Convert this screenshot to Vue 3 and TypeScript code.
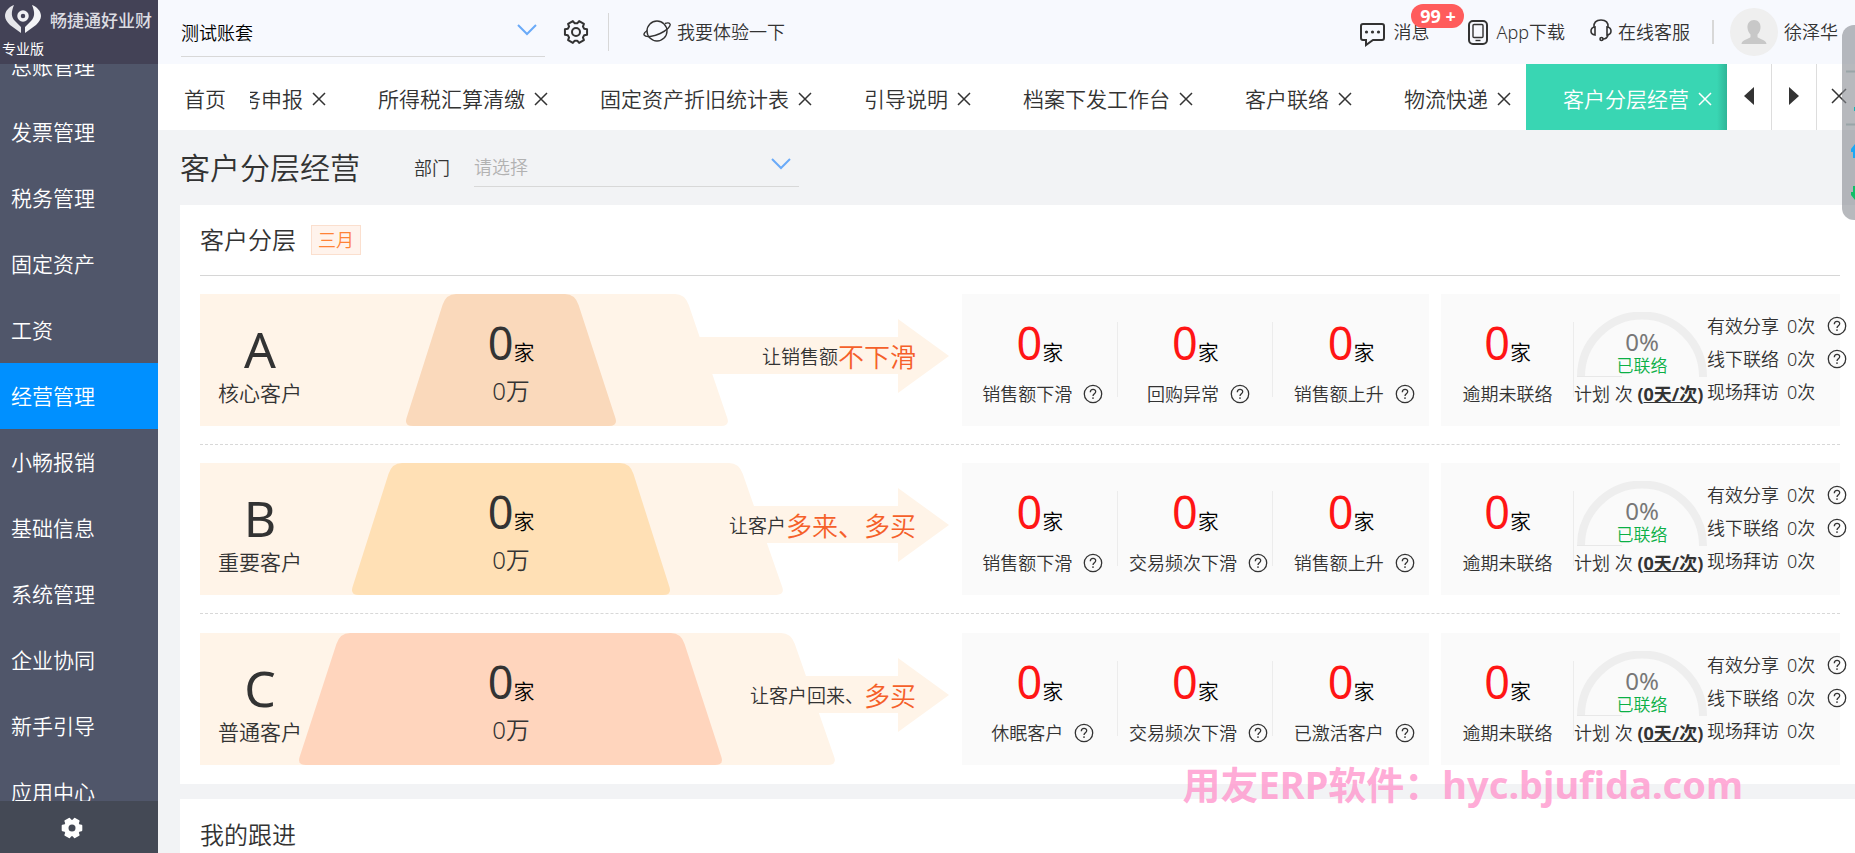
<script setup lang="ts">
import { ref } from 'vue'

interface Stat { label: string; help: boolean }
interface Tier {
  letter: string
  name: string
  fill: string
  inner: [number, number, number, number]
  outer: [number, number]
  plain: string
  strong: string
  stats: Stat[]
}

const menu = ['总账管理', '发票管理', '税务管理', '固定资产', '工资', '经营管理', '小畅报销', '基础信息', '系统管理', '企业协同', '新手引导', '应用中心']
const activeMenu = ref('经营管理')

const tabs = ['税务申报', '所得税汇算清缴', '固定资产折旧统计表', '引导说明', '档案下发工作台', '客户联络', '物流快递', '客户分层经营']
const activeTab = ref('客户分层经营')

const account = ref('测试账套')
const department = ref('')

const tiers: Tier[] = [
  {
    letter: 'A', name: '核心客户', fill: '#fad9bb', inner: [246, 375, 418, 204], outer: [485, 530],
    plain: '让销售额', strong: '不下滑',
    stats: [{ label: '销售额下滑', help: true }, { label: '回购异常', help: true }, { label: '销售额上升', help: true }],
  },
  {
    letter: 'B', name: '重要客户', fill: '#ffe0b5', inner: [192, 430, 472, 150], outer: [539, 585],
    plain: '让客户', strong: '多来、多买',
    stats: [{ label: '销售额下滑', help: true }, { label: '交易频次下滑', help: true }, { label: '销售额上升', help: true }],
  },
  {
    letter: 'C', name: '普通客户', fill: '#ffd5bd', inner: [140, 481, 524, 97], outer: [591, 637],
    plain: '让客户回来、', strong: '多买',
    stats: [{ label: '休眠客户', help: true }, { label: '交易频次下滑', help: true }, { label: '已激活客户', help: true }],
  },
]

const contacts = [
  { label: '有效分享', help: true },
  { label: '线下联络', help: true },
  { label: '现场拜访', help: false },
]

const H = 132

function rightEdge(top: number, bottom: number): string {
  const s = (bottom - top) / H
  return `H${top - 10} Q${top} 0 ${top + s * 11} 11 L${bottom - s * 8} ${H - 8} Q${bottom} ${H} ${bottom - 9} ${H}`
}

function basePath(t: Tier): string {
  return `M0 0 ${rightEdge(t.outer[0], t.outer[1])} H0 Z`
}

function innerPath(t: Tier): string {
  const [tl, tr, br, bl] = t.inner
  const s = (tl - bl) / H
  return `M${tl + 10} 0 ${rightEdge(tr, br)} H${bl + 9} Q${bl} ${H} ${bl + s * 8} ${H - 8} L${tl - s * 11} 11 Q${tl} 0 ${tl + 10} 0 Z`
}

// Six-toothed cog outline centred on (c, c)
function gearPath(c: number, outer: number, root: number): string {
  const pts: string[] = []
  for (let i = 0; i < 6; i++) {
    const steps: [number, number][] = [[-22, root], [-14, outer], [14, outer], [22, root]]
    for (const [offset, radius] of steps) {
      const a = ((i * 60 + offset) * Math.PI) / 180
      pts.push(`${(c + radius * Math.cos(a)).toFixed(2)} ${(c + radius * Math.sin(a)).toFixed(2)}`)
    }
  }
  return `M${pts.join('L')}Z`
}
</script>

<template>
  <div class="shell">
    <aside class="sidebar">
      <div class="brand">
        <div class="brand-line">
          <svg class="brand-mark" viewBox="0 0 36 30" aria-hidden="true">
            <path d="M9 1C4 3 0 7 0 12c0 3 2 6 5 9l11 8v-6l-6-6c-4-4-4-9-1-16z" fill="#e6e6ea" />
            <path d="M27 1c5 2 9 6 9 11 0 3-2 6-5 9l-11 8v-6l6-6c4-4 4-9 1-16z" fill="#f4f4f6" />
            <circle cx="18" cy="12" r="4" fill="none" stroke="#f0f0f3" stroke-width="3.500" />
          </svg>
          <span class="brand-name">畅捷通好业财</span>
        </div>
        <div class="edition">专业版</div>
      </div>
      <nav class="menu">
        <ul>
          <li v-for="m in menu" :key="m">
            <a href="#" :class="{ on: m === activeMenu }" @click.prevent="activeMenu = m">{{ m }}</a>
          </li>
        </ul>
      </nav>
      <button class="side-foot" type="button" aria-label="设置">
        <svg width="22" height="22" viewBox="0 0 22 22" aria-hidden="true">
          <path :d="gearPath(11, 9.8, 7.6)" fill="#fff" stroke="#fff" stroke-width="1.600" stroke-linejoin="round" />
          <circle cx="11" cy="11" r="3.500" fill="#444955" />
        </svg>
      </button>
    </aside>

    <div class="main">
      <header class="topbar">
        <div class="select-box account">
          <select v-model="account" aria-label="账套">
            <option>测试账套</option>
          </select>
          <svg class="chev" width="20" height="12" viewBox="0 0 20 12" aria-hidden="true"><path d="M1 1l9 9 9-9" /></svg>
        </div>
        <button class="plain gear" type="button" aria-label="账套设置">
          <svg width="26" height="26" viewBox="0 0 26 26" aria-hidden="true">
            <g fill="none" stroke="#333" stroke-width="2" stroke-linejoin="round">
              <path :d="gearPath(13, 11.4, 8.8)" />
              <circle cx="13" cy="13" r="4" />
            </g>
          </svg>
        </button>
        <span class="rule tall"></span>
        <a class="top-link try" href="#">
          <svg width="28" height="24" viewBox="0 0 28 24" aria-hidden="true">
            <g fill="none" stroke="#333" stroke-width="1.400">
              <circle cx="14" cy="11" r="10" />
              <path d="M4.300 10.500C2 12 .5 14 1.200 15.200c1.500 2.500 9 1.500 16-1.700S28 6 27 4c-.6-1-3-1.200-5-.5" />
            </g>
          </svg>
          我要体验一下
        </a>
        <div class="top-right">
          <a class="top-link msg" href="#">
            <svg width="25" height="29" viewBox="0 0 25 29" aria-hidden="true">
              <path d="M3 6h19q2 0 2 2v12q0 2-2 2h-9l-7 5v-5H3q-2 0-2-2V8q0-2 2-2z" fill="none" stroke="#333" stroke-width="2" />
              <g fill="#333"><circle cx="6.500" cy="14" r="1.600" /><circle cx="12.500" cy="14" r="1.600" /><circle cx="18.500" cy="14" r="1.600" /></g>
            </svg>
            消息
            <span class="badge">99 +</span>
          </a>
          <a class="top-link app" href="#">
            <svg width="20" height="25" viewBox="0 0 20 25" aria-hidden="true">
              <rect x="1" y="1" width="18" height="23" rx="4" fill="none" stroke="#333" stroke-width="2" />
              <rect x="5" y="4.500" width="10" height="13" rx="1" fill="none" stroke="#333" stroke-width="1.400" />
              <path d="M7.500 20.500h5" stroke="#333" stroke-width="1.400" />
            </svg>
            App下载
          </a>
          <a class="top-link service" href="#">
            <svg width="22" height="26" viewBox="0 0 22 26" aria-hidden="true">
              <g fill="none" stroke="#333" stroke-width="1.600">
                <path d="M4 8C3.500 3.500 6 1 11 1s7.500 2.500 7 7" />
                <path d="M5 8v8Q1 15.500 1 12T5 8z" />
                <path d="M17 8v8q4-.5 4-4T17 8z" />
                <path d="M18 16q-1 4-5 4" />
                <circle cx="11.500" cy="20" r="1.500" />
              </g>
            </svg>
            在线客服
          </a>
          <span class="rule short"></span>
          <a class="top-link user" href="#">
            <svg width="48" height="48" viewBox="0 0 48 48" aria-hidden="true">
              <circle cx="24" cy="24" r="24" fill="#efefef" />
              <path d="M24 12c4 0 7 3 6.500 8-.3 3-1.500 5-3 6.500V29c0 1.500 9 2.500 9 7H11.500c0-4.500 9-5.500 9-7v-2.500c-1.500-1.500-2.700-3.500-3-6.500C17 15 20 12 24 12z" fill="#c8c8c8" />
            </svg>
            徐泽华
          </a>
        </div>
      </header>

      <div class="tabbar">
        <button class="home" type="button">首页</button>
        <div class="tabs">
          <div v-for="t in tabs" :key="t" class="tab" :class="{ current: t === activeTab }">
            <button class="tab-text" type="button" @click="activeTab = t">{{ t }}</button>
            <button class="tab-x" type="button" :aria-label="'关闭' + t">
              <svg width="14" height="14" viewBox="0 0 14 14" aria-hidden="true"><path d="M1 1l12 12M13 1L1 13" /></svg>
            </button>
          </div>
        </div>
        <div class="tab-tools">
          <button type="button" aria-label="向左"><svg width="10" height="18" viewBox="0 0 10 18" aria-hidden="true"><path d="M10 0v18L0 9z" fill="#333" /></svg></button>
          <button type="button" aria-label="向右"><svg width="10" height="18" viewBox="0 0 10 18" aria-hidden="true"><path d="M0 0v18l10-9z" fill="#333" /></svg></button>
          <button type="button" aria-label="全部关闭"><svg width="16" height="16" viewBox="0 0 16 16" aria-hidden="true"><path d="M1 1l14 14M15 1L1 15" stroke="#333" stroke-width="1.500" /></svg></button>
        </div>
      </div>

      <main class="content">
        <div class="page-head">
          <h1>客户分层经营</h1>
          <label for="dept">部门</label>
          <div class="select-box dept">
            <select id="dept" v-model="department" class="empty">
              <option value="">请选择</option>
            </select>
            <svg class="chev" width="20" height="12" viewBox="0 0 20 12" aria-hidden="true"><path d="M1 1l9 9 9-9" /></svg>
          </div>
        </div>

        <section class="card tiers">
          <div class="card-head">
            <h2>客户分层</h2>
            <span class="month">三月</span>
          </div>

          <div v-for="t in tiers" :key="t.letter" class="tier">
            <div class="funnel">
              <svg class="funnel-bg" viewBox="0 0 750 132" preserveAspectRatio="none" aria-hidden="true">
                <path :d="basePath(t)" fill="#fff4e8" />
                <path d="M490 43H698V25L749 62L698 99V80H490z" fill="#fff4e8" />
                <path :d="innerPath(t)" :fill="t.fill" />
              </svg>
              <div class="grade">
                <div class="letter">{{ t.letter }}</div>
                <div class="grade-name">{{ t.name }}</div>
              </div>
              <div class="count">
                <div class="num"><b>0</b>家</div>
                <div class="amount">0万</div>
              </div>
              <div class="goal">{{ t.plain }}<em>{{ t.strong }}</em></div>
            </div>

            <div class="panel stats">
              <div v-for="s in t.stats" :key="s.label" class="stat">
                <div class="num red"><b>0</b>家</div>
                <div class="stat-label helped">
                  {{ s.label }}
                  <button class="help" type="button" :aria-label="s.label + '说明'">
                    <svg width="20" height="20" viewBox="0 0 20 20" aria-hidden="true">
                      <circle cx="10" cy="10" r="8.700" /><path d="M7.300 8.200c0-3.800 5.600-3.600 5.400-.4-.1 2-2.700 2-2.700 4.200M10 13.300v1.700" />
                    </svg>
                  </button>
                </div>
              </div>
            </div>

            <div class="panel contact">
              <div class="stat">
                <div class="num red"><b>0</b>家</div>
                <div class="stat-label">逾期未联络</div>
              </div>
              <div class="gauge">
                <div class="dial">
                  <svg width="130" height="65" viewBox="0 0 130 65" aria-hidden="true">
                    <path d="M4 65V64.500a61 61 0 0 1 122 0V65" fill="none" stroke="#eee" stroke-width="8" />
                    <path d="M0 64.500h45" stroke="#e8e8e8" />
                  </svg>
                  <div class="dial-text">
                    <span class="pct">0%</span>
                    <span class="done">已联络</span>
                  </div>
                </div>
                <div class="plan">计划 次 <strong>(<a href="#">0天/次</a>)</strong></div>
              </div>
              <ul class="contact-list">
                <li v-for="c in contacts" :key="c.label">
                  <span>{{ c.label }}</span><span>0次</span>
                  <button v-if="c.help" class="help" type="button" :aria-label="c.label + '说明'">
                    <svg width="20" height="20" viewBox="0 0 20 20" aria-hidden="true">
                      <circle cx="10" cy="10" r="8.700" /><path d="M7.300 8.200c0-3.800 5.600-3.600 5.400-.4-.1 2-2.700 2-2.700 4.200M10 13.300v1.700" />
                    </svg>
                  </button>
                </li>
              </ul>
            </div>
          </div>
        </section>

        <section class="card follow">
          <h2>我的跟进</h2>
        </section>
      </main>
    </div>

    <div class="dock">
      <svg width="13" height="195" viewBox="0 0 13 195" aria-hidden="true">
        <path d="M4 46.500h9M4 99.500h9" stroke="#9aa5a8" stroke-width="2" />
        <path d="M12 82h1v4h-1z" fill="#18b4b4" />
        <path d="M13 119v14h-2v-6H9v-3z" fill="#1ba8f5" />
        <path d="M13 175v-14h-2v6H9v3z" fill="#0fbf68" />
      </svg>
    </div>
    <div class="watermark">用友ERP软件：hyc.bjufida.com</div>
  </div>
</template>

<style>
body {
  margin: 0;
}
</style>

<style scoped>
.shell {
  position: relative;
  display: flex;
  height: 100vh;
  overflow: hidden;
  background: #f2f3f5;
  color: #333;
  font-family: "Noto Sans", "Noto Sans CJK SC", sans-serif;
  font-weight: 350;
  font-size: 18px;
  line-height: 24px;
}
button, select {
  font: inherit;
  color: inherit;
  background: none;
  border: 0;
  margin: 0;
  padding: 0;
  cursor: pointer;
}
svg {
  display: block;
  flex: none;
}
a {
  color: inherit;
  text-decoration: none;
}
ul {
  list-style: none;
  margin: 0;
  padding: 0;
}
h1, h2 {
  margin: 0;
  font-weight: 350;
}

.sidebar {
  flex: none;
  width: 158px;
  display: flex;
  flex-direction: column;
  background: #50566a;
  color: #fff;
}
.brand {
  flex: none;
  box-sizing: border-box;
  height: 64px;
  padding: 3px 0 0 2px;
  background: #434256;
}
.brand-line {
  display: flex;
  align-items: center;
  gap: 9px;
  height: 32px;
  padding-left: 3px;
}
.brand-mark {
  width: 36px;
  height: 30px;
}
.brand-name {
  padding-top: 4px;
  font-size: 17px;
  font-weight: 500;
  color: #dcdce2;
  white-space: nowrap;
}
.edition {
  font-size: 14px;
  font-weight: 400;
  line-height: 28px;
}
.menu {
  flex: 1;
  min-height: 0;
  overflow: hidden;
}
.menu ul {
  margin-top: -31px;
}
.menu a {
  display: block;
  padding-left: 11px;
  font-size: 21px;
  line-height: 66px;
}
.menu a.on {
  background: #0090ff;
}
.side-foot {
  flex: none;
  display: flex;
  align-items: center;
  justify-content: center;
  height: 52px;
  padding: 2px 14px 0 0;
  background: #444955;
}

.main {
  flex: 1;
  min-width: 0;
  display: flex;
  flex-direction: column;
}
.topbar {
  flex: none;
  display: flex;
  align-items: center;
  height: 64px;
  padding: 0 17px 0 23px;
  background: #f7f9fe;
}
.select-box {
  position: relative;
  border-bottom: 1px solid #d8d8d8;
}
.select-box select {
  display: block;
  width: 100%;
  height: 100%;
  appearance: none;
  outline: none;
}
.chev {
  position: absolute;
  right: 8px;
  top: 50%;
  margin-top: -9px;
  pointer-events: none;
}
.chev path {
  fill: none;
  stroke: #6aaaf8;
  stroke-width: 2;
}
.account {
  width: 364px;
  height: 46px;
  margin-top: 2px;
  color: #000;
}
.gear {
  margin-left: 18px;
}
.rule {
  flex: none;
  background: #d8d8d8;
}
.rule.tall {
  width: 1px;
  height: 38px;
  margin: 0 34px 0 19px;
}
.rule.short {
  width: 2px;
  height: 24px;
  margin: 0 16px 0 22px;
}
.top-link {
  position: relative;
  display: flex;
  align-items: center;
  gap: 6px;
  white-space: nowrap;
}
.top-right {
  margin-left: auto;
  display: flex;
  align-items: center;
}
.msg, .app {
  gap: 8px;
}
.app {
  margin-left: 39px;
}
.service {
  margin-left: 25px;
}
.badge {
  position: absolute;
  left: 51px;
  top: -14px;
  width: 53px;
  height: 24px;
  border-radius: 12px;
  background: #ff5c5c;
  color: #fff;
  font-size: 18px;
  font-weight: 700;
  text-align: center;
}

.tabbar {
  flex: none;
  display: flex;
  height: 66px;
  background: #fff;
  font-size: 21px;
}
.home {
  flex: none;
  padding: 4px 24px 0 26px;
}
.tabs {
  flex: 1;
  min-width: 0;
  display: flex;
  justify-content: flex-end;
  overflow: hidden;
}
.tab {
  flex: none;
  display: flex;
  align-items: center;
  padding: 4px 15px 0 37px;
}
.tab-x {
  padding-left: 9px;
}
.tab-x path {
  fill: none;
  stroke: currentColor;
  stroke-width: 1.5;
}
.tab.current {
  color: #fff;
  background: linear-gradient(to left, #2fb597, #39d6b3 10px);
}
.tab-tools {
  flex: none;
  display: flex;
  width: 128px;
  overflow: hidden;
}
.tab-tools button {
  flex: none;
  display: flex;
  align-items: center;
  justify-content: center;
  width: 44px;
  padding-bottom: 2px;
}
.tab-tools button + button {
  width: 45px;
  border-left: 1px solid #ddd;
}

.content {
  flex: 1;
  min-height: 0;
  overflow: hidden;
  padding-left: 22px;
}
.page-head {
  display: flex;
  align-items: center;
  height: 75px;
}
h1 {
  font-size: 30px;
  line-height: 40px;
}
.page-head label {
  margin: 0 24px 0 54px;
}
.dept {
  width: 325px;
  height: 38px;
}
.empty {
  color: #b2b2b2;
}
.card {
  background: #fff;
  padding: 0 15px 19px 20px;
}
h2 {
  font-size: 24px;
  line-height: 32px;
}
.card-head {
  display: flex;
  align-items: center;
  gap: 15px;
  height: 70px;
  border-bottom: 1px solid #d6d6d6;
}
.month {
  box-sizing: border-box;
  height: 30px;
  padding: 0 6px;
  border: 1px solid #fbdfce;
  background: #fff3ec;
  color: #ff8236;
  line-height: 28px;
}
.tier {
  display: grid;
  grid-template-columns: minmax(0, 750fr) minmax(0, 467fr) minmax(0, 399fr);
  gap: 12px;
  height: 132px;
  padding: 18px 0;
}
.tier + .tier {
  border-top: 1px dashed #d8d8d8;
}
.tier:last-child {
  padding: 19px 0 0;
}
.funnel {
  position: relative;
  display: grid;
  grid-template-columns: 120fr 382fr 248fr;
}
.funnel-bg {
  position: absolute;
  inset: 0;
  width: 100%;
  height: 100%;
}
.grade, .count, .goal {
  position: relative;
  text-align: center;
}
.grade {
  padding-top: 26px;
}
.letter {
  font-size: 50px;
  font-weight: 400;
  line-height: 58px;
}
.grade-name {
  font-size: 21px;
  line-height: 30px;
}
.count {
  padding-top: 19px;
}
.num {
  height: 60px;
  font-size: 21px;
  line-height: 60px;
  color: #000;
}
.num b {
  font-size: 45px;
  font-weight: 400;
  line-height: 60px;
  color: #333;
}
.num.red b {
  color: #ff1515;
}
.amount {
  font-size: 24px;
  line-height: 36px;
}
.goal {
  display: flex;
  align-items: center;
  justify-content: flex-end;
  height: 126px;
  padding-right: 34px;
  font-size: 19px;
  white-space: nowrap;
}
.goal em {
  font-size: 26px;
  font-style: normal;
  color: #f5602a;
}
.panel {
  display: grid;
  grid-template-columns: repeat(3, minmax(0, 1fr));
  background: #fafafa;
}
.stat {
  position: relative;
  padding-top: 19px;
  text-align: center;
}
.stat:not(:last-child)::after {
  content: "";
  position: absolute;
  right: 0;
  top: 28px;
  height: 75px;
  border-right: 1px solid #ececec;
}
.stat-label {
  display: flex;
  align-items: center;
  justify-content: center;
  gap: 11px;
  margin-top: 9px;
  white-space: nowrap;
}
.helped {
  padding-left: 6px;
}
.help path, .help circle {
  fill: none;
  stroke: #333;
  stroke-width: 1.3;
}
.gauge {
  padding-top: 18px;
  white-space: nowrap;
}
.dial {
  position: relative;
  width: 130px;
  height: 65px;
  margin-left: 3px;
}
.dial-text {
  position: absolute;
  inset: 16px 0 0;
  display: flex;
  flex-direction: column;
  align-items: center;
}
.pct {
  font-size: 24px;
  font-weight: 400;
  line-height: 28px;
  color: #777;
}
.done {
  font-size: 17px;
  line-height: 20px;
  color: #0bb046;
}
.plan {
  margin-top: 5px;
}
.plan strong {
  font-weight: 700;
}
.plan a {
  text-decoration: underline;
}
.contact-list {
  padding-top: 15px;
}
.contact-list li {
  display: flex;
  align-items: center;
  gap: 8px;
  height: 33px;
  white-space: nowrap;
}
.contact-list .help {
  margin-left: 4px;
}
.follow {
  margin-top: 15px;
  padding-top: 20px;
  height: 60px;
}
.dock {
  position: absolute;
  right: 0;
  top: 25px;
  border-radius: 12px 0 0 12px;
  background: rgba(135, 138, 145, 0.6);
}
.watermark {
  position: absolute;
  right: 112px;
  bottom: 45px;
  font-size: 38px;
  font-weight: 700;
  line-height: 48px;
  color: rgba(255, 150, 205, 0.8);
  white-space: nowrap;
  pointer-events: none;
}
</style>
